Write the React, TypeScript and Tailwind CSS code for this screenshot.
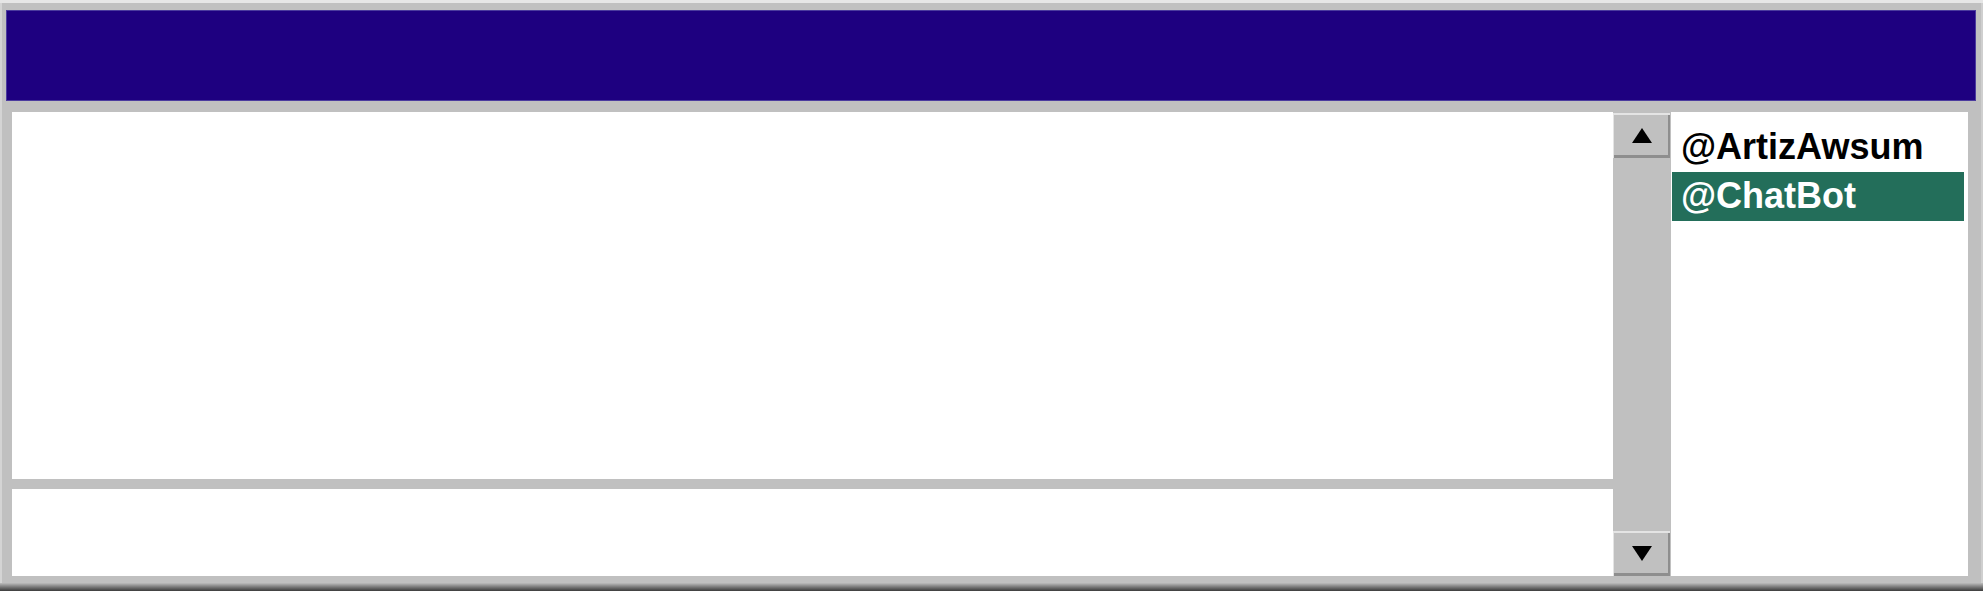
import React from "react";

function ScrollButton({ dir }: { dir: "up" | "down" }) {
  return (
    <div className="flex h-[45px] w-[57px] items-center justify-center bg-[#c0c0c0] shadow-[inset_1px_2px_0_#e4e4e4,inset_-2px_-3px_0_#8e8e8e]">
      <svg width="20" height="15" viewBox="0 0 20 15">
        {dir === "up" ? (
          <polygon points="10,0 20,15 0,15" fill="#000" />
        ) : (
          <polygon points="0,0 20,0 10,15" fill="#000" />
        )}
      </svg>
    </div>
  );
}

const users = [
  { name: "@ArtizAwsum", active: false },
  { name: "@ChatBot", active: true },
];

export default function App() {
  return (
    <div className="flex h-[591px] w-full flex-col bg-[#c0c0c0] font-['Liberation_Sans',Arial,sans-serif]">
      {/* top highlight */}
      <div className="h-[3px] bg-[#e6e6e6]" />

      <div className="flex flex-1 flex-col border-l-2 border-r-2 border-l-[#d4d4d4] border-r-[#cfcfcf]">
        {/* title bar */}
        <div className="ml-[4px] mr-[5px] mt-[7px] h-[91px] border border-[#4b3b9e] bg-[#1e0080]" />

        {/* body */}
        <div className="ml-[10px] mr-[13px] mt-[11px] flex h-[464px]">
          <div className="flex flex-1 flex-col gap-[10px]">
            <div className="h-[367px] bg-white" />
            <div className="flex-1 bg-white" />
          </div>

          <div className="flex w-[58px] flex-col justify-between pt-[1px]">
            <ScrollButton dir="up" />
            <ScrollButton dir="down" />
          </div>

          <div className="w-[297px] bg-white pt-[11px]">
            {users.map((u) => (
              <div
                key={u.name}
                className={
                  u.active
                    ? "ml-[1px] mr-[4px] h-[49px] bg-[#236e5a] pl-[9px] pt-[6px] text-[36px] font-bold leading-none text-white"
                    : "ml-[1px] mr-[4px] h-[49px] pl-[9px] pt-[6px] text-[36px] font-bold leading-none text-black"
                }
              >
                {u.name}
              </div>
            ))}
          </div>
        </div>
        <div className="h-[7px]" />
      </div>

      {/* bottom shadow */}
      <div className="h-[8px] bg-linear-to-b from-[#bdbdbd] to-[#3c3c3c]" />
    </div>
  );
}
